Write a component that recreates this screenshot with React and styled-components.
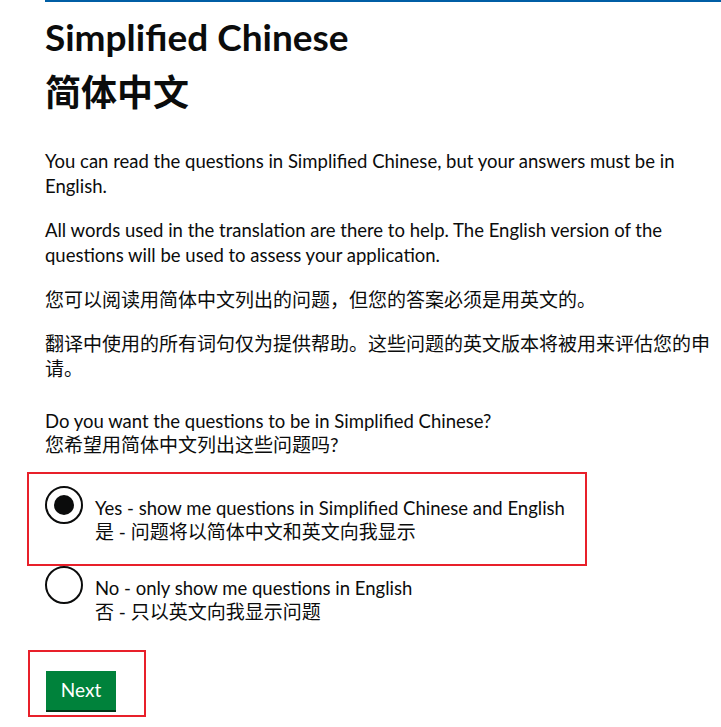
import styled, { createGlobalStyle } from "styled-components";

const GlobalStyle = createGlobalStyle`
  body {
    margin: 0;
    background: #ffffff;
    color: #0b0c0c;
    font-family: Lato, "Noto Sans CJK SC", sans-serif;
  }
`;

const Page = styled.main`
  margin-left: 45px;
  border-top: 2px solid #005ea5;
  padding-top: 15px;
`;

const Heading = styled.h1`
  margin: 0 0 32px;
  font-weight: 700;
  font-size: 36px;
`;

const HeadingLine = styled.span`
  display: block;
  font-size: ${(p) => (p.$zh ? 36 : 37)}px;
  line-height: ${(p) => p.$lh}px;
  margin-bottom: ${(p) => p.$gap || 0}px;
`;

// english copy runs a touch smaller so the lines break where the original does
const Para = styled.p`
  margin: 0 0 19px;
  font-size: ${(p) => (p.$zh ? 19 : 18.5)}px;
  line-height: 25px;
  max-width: 670px;
`;

const Fieldset = styled.fieldset`
  border: 0;
  padding: 0;
  margin: 29px 0 0;
`;

const Legend = styled.legend`
  padding: 0;
  margin-bottom: 16px;
`;

const Line = styled.span`
  display: block;
  white-space: nowrap;
  font-size: ${(p) => (p.$zh ? 19 : 18.5)}px;
  line-height: ${(p) => p.$lh || 24}px;
`;

const Highlight = styled.div`
  border: 2px solid #e8202a;
  margin-left: ${(p) => p.$ml}px;
  margin-top: ${(p) => p.$mt || 0}px;
  width: ${(p) => p.$w}px;
  height: ${(p) => p.$h}px;
  padding: ${(p) => p.$pad};
  box-sizing: border-box;
`;

const Option = styled.label`
  display: flex;
  align-items: flex-start;
  gap: 12px;
  cursor: pointer;
`;

const Circle = styled.span`
  flex: none;
  width: 38px;
  height: 38px;
  box-sizing: border-box;
  border: 2px solid #0b0c0c;
  border-radius: 50%;
  display: flex;
  align-items: center;
  justify-content: center;
  &::after {
    content: "";
    display: ${(p) => (p.$checked ? "block" : "none")};
    width: 20px;
    height: 20px;
    border-radius: 50%;
    background: #0b0c0c;
  }
`;

const OptionText = styled.span`
  padding-top: 10px;
`;

const Button = styled.button`
  font-family: inherit;
  font-size: 19px;
  line-height: 25px;
  color: #ffffff;
  background: #00823b;
  border: 0;
  box-shadow: 0 2px 0 #003618;
  padding: 6px 0 8px;
  width: 70px;
  height: 39px;
  cursor: pointer;
`;

export default function App() {
  return (
    <>
      <GlobalStyle />
      <Page>
        <Heading>
          <HeadingLine $lh={40} $gap={10}>Simplified Chinese</HeadingLine>
          <HeadingLine $lh={50} $zh>简体中文</HeadingLine>
        </Heading>
        <Para>
          You can read the questions in Simplified Chinese, but your answers
          must be in English.
        </Para>
        <Para>
          All words used in the translation are there to help. The English
          version of the questions will be used to assess your application.
        </Para>
        <Para $zh>您可以阅读用简体中文列出的问题，但您的答案必须是用英文的。</Para>
        <Para $zh>
          翻译中使用的所有词句仅为提供帮助。这些问题的英文版本将被用来评估您的申请。
        </Para>
        <Fieldset>
          <Legend>
            <Line $lh={23}>Do you want the questions to be in Simplified Chinese?</Line>
            <Line $lh={23} $zh>您希望用简体中文列出这些问题吗?</Line>
          </Legend>
          <Highlight $ml={-18} $w={560} $h={94} $pad="12px 16px 0">
            <Option>
              <Circle $checked />
              <OptionText>
                <Line>Yes - show me questions in Simplified Chinese and English</Line>
                <Line $zh>是 - 问题将以简体中文和英文向我显示</Line>
              </OptionText>
            </Option>
          </Highlight>
          <Option>
            <Circle />
            <OptionText>
              <Line>No - only show me questions in English</Line>
              <Line $zh>否 - 只以英文向我显示问题</Line>
            </OptionText>
          </Option>
        </Fieldset>
        <Highlight $ml={-17} $mt={26} $w={118} $h={67} $pad="19px 0 0 16px">
          <Button>Next</Button>
        </Highlight>
      </Page>
    </>
  );
}
